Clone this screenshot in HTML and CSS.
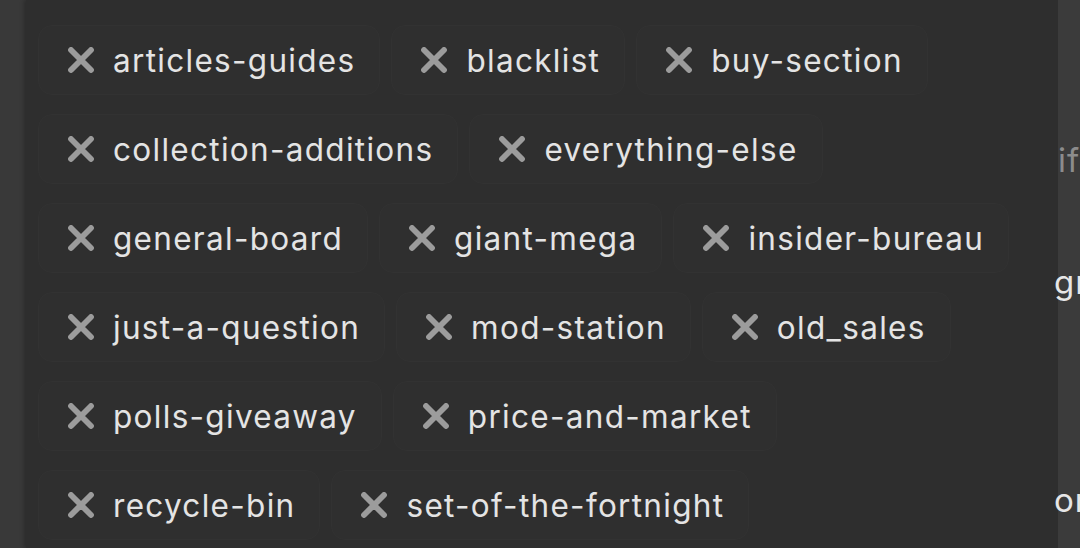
FILE: index.html
```html
<!DOCTYPE html>
<html lang="en">
<head>
    <meta charset="UTF-8">
    <meta name="viewport" content="width=device-width, initial-scale=1.0">
    <title>Channels</title>
    <link rel="stylesheet" href="styles.css">
</head>
<body>

    <div class="layout">
        <div class="side-left"></div>

        <!-- Lista de canais ignorados -->
        <div class="tag-panel">
            <div class="tag-list">
                <span class="tag"><svg class="tag-x" viewBox="0 0 26 26"><path d="M3 3L23 23M23 3L3 23"/></svg>articles-guides</span>
                <span class="tag"><svg class="tag-x" viewBox="0 0 26 26"><path d="M3 3L23 23M23 3L3 23"/></svg>blacklist</span>
                <span class="tag"><svg class="tag-x" viewBox="0 0 26 26"><path d="M3 3L23 23M23 3L3 23"/></svg>buy-section</span>
                <span class="tag"><svg class="tag-x" viewBox="0 0 26 26"><path d="M3 3L23 23M23 3L3 23"/></svg>collection-additions</span>
                <span class="tag"><svg class="tag-x" viewBox="0 0 26 26"><path d="M3 3L23 23M23 3L3 23"/></svg>everything-else</span>
                <span class="tag"><svg class="tag-x" viewBox="0 0 26 26"><path d="M3 3L23 23M23 3L3 23"/></svg>general-board</span>
                <span class="tag"><svg class="tag-x" viewBox="0 0 26 26"><path d="M3 3L23 23M23 3L3 23"/></svg>giant-mega</span>
                <span class="tag"><svg class="tag-x" viewBox="0 0 26 26"><path d="M3 3L23 23M23 3L3 23"/></svg>insider-bureau</span>
                <span class="tag"><svg class="tag-x" viewBox="0 0 26 26"><path d="M3 3L23 23M23 3L3 23"/></svg>just-a-question</span>
                <span class="tag"><svg class="tag-x" viewBox="0 0 26 26"><path d="M3 3L23 23M23 3L3 23"/></svg>mod-station</span>
                <span class="tag"><svg class="tag-x" viewBox="0 0 26 26"><path d="M3 3L23 23M23 3L3 23"/></svg>old_sales</span>
                <span class="tag"><svg class="tag-x" viewBox="0 0 26 26"><path d="M3 3L23 23M23 3L3 23"/></svg>polls-giveaway</span>
                <span class="tag"><svg class="tag-x" viewBox="0 0 26 26"><path d="M3 3L23 23M23 3L3 23"/></svg>price-and-market</span>
                <span class="tag"><svg class="tag-x" viewBox="0 0 26 26"><path d="M3 3L23 23M23 3L3 23"/></svg>recycle-bin</span>
                <span class="tag"><svg class="tag-x" viewBox="0 0 26 26"><path d="M3 3L23 23M23 3L3 23"/></svg>set-of-the-fortnight</span>
            </div>
        </div>

        <div class="side-right">
            <div class="side-word muted">if</div>
            <div class="side-word">gr</div>
            <div class="side-word low">or</div>
        </div>
    </div>

</body>
</html>
```

FILE: styles.css
```css
* {
    margin: 0;
    padding: 0;
    box-sizing: border-box;
}

body {
    font-family: Inter, 'Noto Sans', sans-serif;
    background-color: #3a3a3a;
    color: #e4e4e4;
    width: 1080px;
    height: 548px;
    overflow: hidden;
}

.layout {
    display: flex;
    height: 548px;
}

.side-left {
    width: 26px;
    flex-shrink: 0;
    background-color: #393939;
}

.tag-panel {
    width: 1032px;
    flex-shrink: 0;
    background-color: #2e2e2e;
    box-shadow: -2px 0 4px rgba(0, 0, 0, 0.25);
    padding: 25px 12px 0 12px;
    position: relative;
    z-index: 0;
}

.tag-list {
    display: flex;
    flex-wrap: wrap;
    row-gap: 19px;
    column-gap: 11px;
}

.tag {
    display: flex;
    align-items: center;
    height: 70px;
    padding: 0 24px 0 29px;
    background-color: #2f2f2f;
    border: 1px solid #323232;
    border-radius: 14px;
    font-size: 31.5px;
    letter-spacing: 1.3px;
    white-space: nowrap;
}

.tag-x {
    width: 26px;
    height: 26px;
    margin-right: 19px;
    flex-shrink: 0;
    fill: none;
    stroke: #9c9c9c;
    stroke-width: 5.8;
    stroke-linecap: round;
}

.side-right {
    flex: 1;
    background-color: #3b3b3b;
    position: relative;
    z-index: 1;
}

.side-word {
    position: absolute;
    left: -4px;
    font-size: 33px;
    color: #e6e6e6;
    white-space: nowrap;
    letter-spacing: 1px;
}

.side-word.muted {
    left: 0;
    top: 140px;
    color: #8c8c8c;
}

.side-word:nth-child(2) {
    top: 262px;
}

.side-word.low {
    top: 480px;
}
```
